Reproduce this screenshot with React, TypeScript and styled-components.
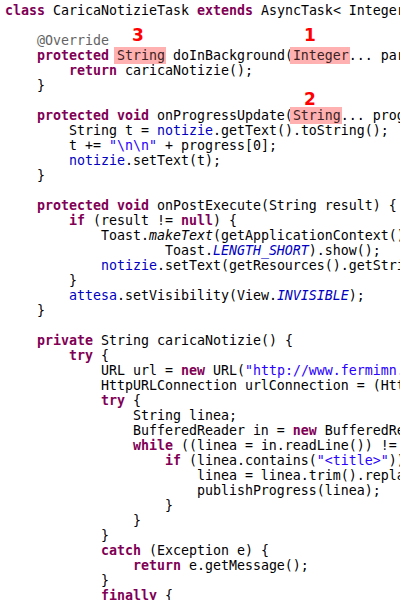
import React from "react";
import styled, { createGlobalStyle } from "styled-components";

const GlobalStyle = createGlobalStyle`
  html, body {
    margin: 0;
    padding: 0;
    background: #ffffff;
  }
`;

const Editor = styled.div`
  position: relative;
  width: 400px;
  height: 600px;
  overflow: hidden;
  box-sizing: border-box;
  padding: 3px 0 0 5px;
  background: #ffffff;
  font-family: "DejaVu Sans Mono", "Liberation Mono", monospace;
  font-size: 13.29px;
  line-height: 15px;
  color: #000000;
  white-space: pre;
`;

const Line = styled.div`
  height: 15px;
`;

const Kw = styled.span`
  font-weight: bold;
  color: #7f0055;
`;

const Field = styled.span`
  color: #0000c0;
`;

const StaticField = styled.span`
  color: #0000c0;
  font-style: italic;
`;

const StaticCall = styled.span`
  font-style: italic;
`;

const Str = styled.span`
  color: #2a00ff;
`;

const Ann = styled.span`
  color: #646464;
`;

const Mark = styled.span`
  background: #ffb0b0;
  color: #3d2222;
  padding: 1px 1px 1px 3px;
  margin: 0 -1px 0 -3px;
`;

const Callout = styled.span<{ $x: number; $y: number }>`
  position: absolute;
  left: ${(p) => p.$x}px;
  top: ${(p) => p.$y}px;
  font-family: "DejaVu Sans", "Liberation Sans", sans-serif;
  font-size: 17px;
  font-weight: bold;
  line-height: 17px;
  color: #ff0000;
  white-space: nowrap;
`;

const lines: React.ReactNode[] = [
  <>
    <Kw>class</Kw> CaricaNotizieTask <Kw>extends</Kw> AsyncTask{"< Integer, String, String> {"}
  </>,
  "",
  <>
    {"    "}
    <Ann>@Override</Ann>
  </>,
  <>
    {"    "}
    <Kw>protected</Kw> <Mark>String</Mark> doInBackground(<Mark>Integer</Mark>... params) {"{"}
  </>,
  <>
    {"        "}
    <Kw>return</Kw> caricaNotizie();
  </>,
  "    }",
  "",
  <>
    {"    "}
    <Kw>protected</Kw> <Kw>void</Kw> onProgressUpdate(<Mark>String</Mark>... progress) {"{"}
  </>,
  <>
    {"        String t = "}
    <Field>notizie</Field>.getText().toString();
  </>,
  <>
    {"        t += "}
    <Str>"\n\n"</Str> + progress[0];
  </>,
  <>
    {"        "}
    <Field>notizie</Field>.setText(t);
  </>,
  "    }",
  "",
  <>
    {"    "}
    <Kw>protected</Kw> <Kw>void</Kw> onPostExecute(String result) {"{"}
  </>,
  <>
    {"        "}
    <Kw>if</Kw> (result != <Kw>null</Kw>) {"{"}
  </>,
  <>
    {"            Toast."}
    <StaticCall>makeText</StaticCall>(getApplicationContext(), result,
  </>,
  <>
    {"                    Toast."}
    <StaticField>LENGTH_SHORT</StaticField>).show();
  </>,
  <>
    {"            "}
    <Field>notizie</Field>.setText(getResources().getString(R.string.errore));
  </>,
  "        }",
  <>
    {"        "}
    <Field>attesa</Field>.setVisibility(View.<StaticField>INVISIBLE</StaticField>);
  </>,
  "    }",
  "",
  <>
    {"    "}
    <Kw>private</Kw> String caricaNotizie() {"{"}
  </>,
  <>
    {"        "}
    <Kw>try</Kw> {"{"}
  </>,
  <>
    {"            URL url = "}
    <Kw>new</Kw> URL(<Str>"http://www.fermimn.gov.it/"</Str>);
  </>,
  "            HttpURLConnection urlConnection = (HttpURLConnection) url.openConnection();",
  <>
    {"            "}
    <Kw>try</Kw> {"{"}
  </>,
  "                String linea;",
  <>
    {"                BufferedReader in = "}
    <Kw>new</Kw> BufferedReader(new InputStreamReader(urlConnection.getInputStream()));
  </>,
  <>
    {"                "}
    <Kw>while</Kw> ((linea = in.readLine()) != <Kw>null</Kw>) {"{"}
  </>,
  <>
    {"                    "}
    <Kw>if</Kw> (linea.contains(<Str>"&lt;title&gt;"</Str>)) {"{"}
  </>,
  <>
    {"                        linea = linea.trim().replace("}
    <Str>"&lt;title&gt;"</Str>, <Str>""</Str>);
  </>,
  "                        publishProgress(linea);",
  "                    }",
  "                }",
  "            }",
  <>
    {"            "}
    <Kw>catch</Kw> (Exception e) {"{"}
  </>,
  <>
    {"                "}
    <Kw>return</Kw> e.getMessage();
  </>,
  "            }",
  <>
    {"            "}
    <Kw>finally</Kw> {"{"}
  </>,
  "                urlConnection.disconnect();",
];

export default function App() {
  return (
    <>
      <GlobalStyle />
      <Editor>
        {lines.map((content, i) => (
          <Line key={i}>{content}</Line>
        ))}
        <Callout $x={132} $y={27}>3</Callout>
        <Callout $x={304} $y={27}>1</Callout>
        <Callout $x={304} $y={91}>2</Callout>
      </Editor>
    </>
  );
}
